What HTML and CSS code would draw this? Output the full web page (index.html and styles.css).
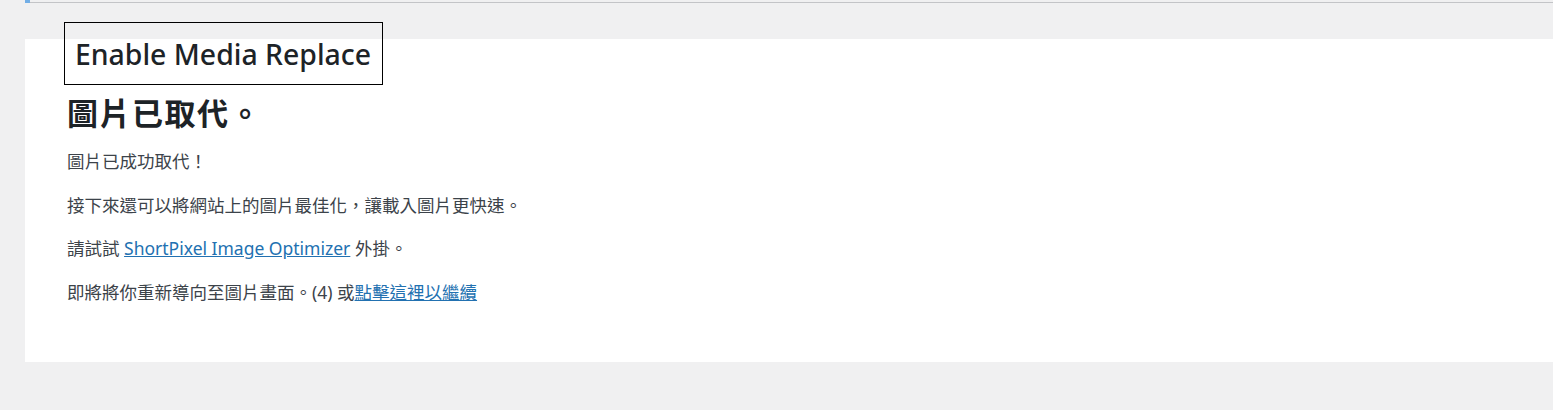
FILE: index.html
```html
<!DOCTYPE html>
<html lang="zh-Hant">
<head>
    <meta charset="UTF-8">
    <title>Enable Media Replace</title>
    <link rel="stylesheet" href="styles.css">
</head>
<body>

    <div class="topbar"><span class="marker"></span></div>

    <div class="wrap">
        <div class="panel">
            <h2 class="plugin-title">Enable Media Replace</h2>

            <h1>圖片已取代。</h1>

            <p>圖片已成功取代！</p>
            <p>接下來還可以將網站上的圖片最佳化，讓載入圖片更快速。</p>
            <p>請試試 <a href="#">ShortPixel Image Optimizer</a> 外掛。</p>
            <p>即將將你重新導向至圖片畫面。(4) 或<a href="#">點擊這裡以繼續</a></p>
        </div>
    </div>

</body>
</html>
```

FILE: styles.css
```css
body {
    margin: 0;
    background-color: #f0f0f1;
    font-family: "Noto Sans", "Noto Sans CJK TC", sans-serif;
    color: #3c434a;
}

.topbar {
    margin-left: 25px;
    height: 2px;
    border-bottom: 1px solid #c3c4c7;
    position: relative;
}

.marker {
    position: absolute;
    left: 0;
    top: 0;
    width: 5px;
    height: 3px;
    background-color: #72aee6;
}

.wrap {
    padding: 36px 0 48px 25px;
}

.panel {
    background-color: #fff;
    padding: 0 39px 40px;
    height: 283px;
    box-sizing: content-box;
}

.plugin-title {
    display: inline-block;
    margin: -17px 0 0;
    padding: 10px 11px 8px 10px;
    border: 1px solid #000;
    font-size: 28.4px;
    font-weight: 500;
    line-height: 43px;
    color: #1d2327;
}

h1 {
    margin: 8px 0 16px 3px;
    font-size: 31px;
    font-weight: 700;
    line-height: 40px;
    letter-spacing: 1.5px;
    color: #1d2327;
}

p {
    margin: 0 0 19.5px 3px;
    font-size: 17.5px;
    line-height: 24px;
}

a {
    color: #2271b1;
}
```
